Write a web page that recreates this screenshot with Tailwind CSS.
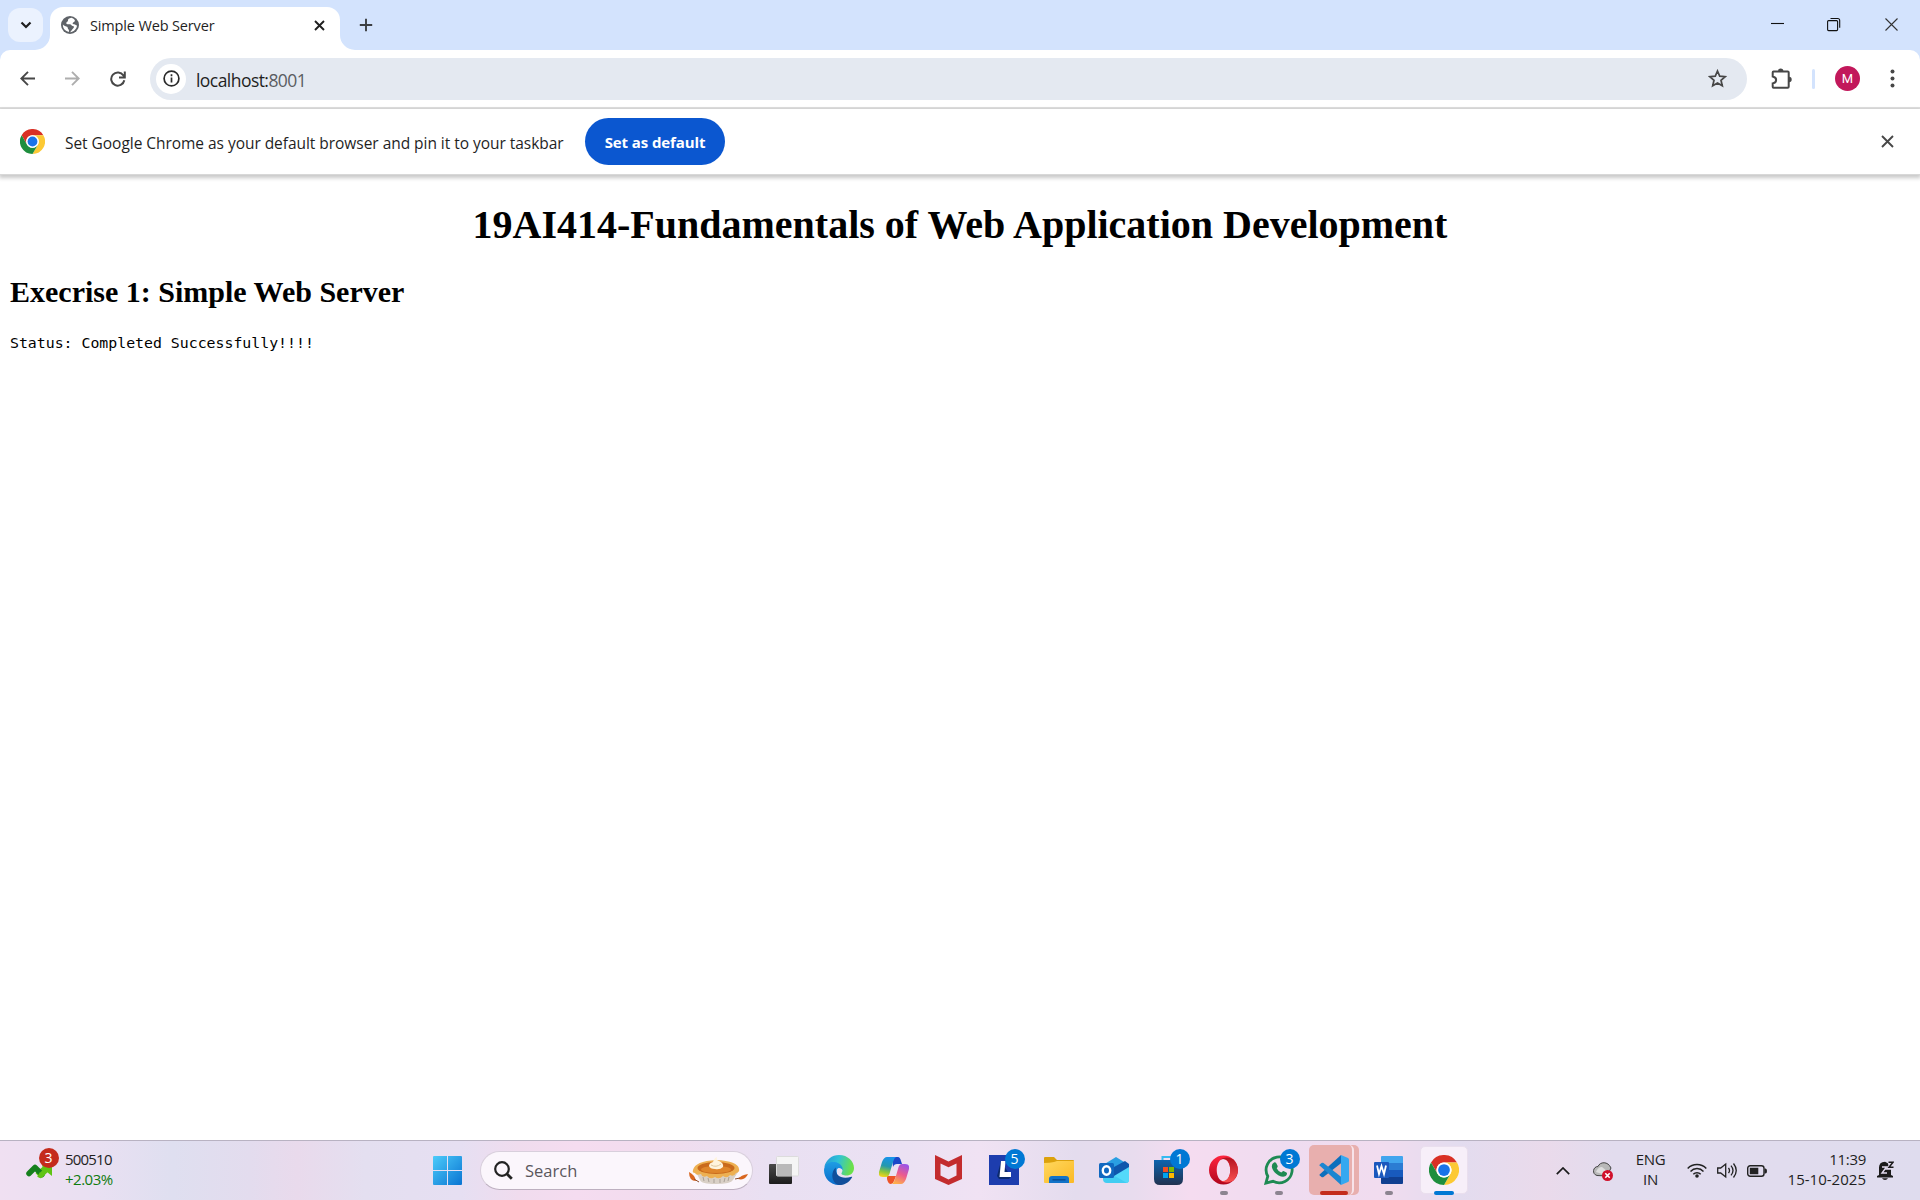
<!DOCTYPE html>
<html lang="en">
<head>
<meta charset="utf-8">
<title>Simple Web Server</title>
<script src="https://cdn.jsdelivr.net/npm/@tailwindcss/browser@4"></script>
</head>
<body class="w-[1920px] h-[1200px] overflow-hidden flex flex-col bg-white font-['Open_Sans','Noto_Sans',sans-serif] text-[#1f1f1f]">
<svg class="hidden">
  <symbol id="chrome" viewBox="0 0 48 48">
    <circle cx="24" cy="24" r="24" fill="#fff"/>
    <path fill="#d93025" d="M3.2 12A24 24 0 0 1 44.8 12H24A12 12 0 0 0 13.6 30Z"/>
    <path fill="#fcc934" d="M44.8 12A24 24 0 0 1 24 48L34.4 30A12 12 0 0 0 24 12Z"/>
    <path fill="#1e8e3e" d="M24 48A24 24 0 0 1 3.2 12L13.6 30A12 12 0 0 0 34.4 30Z"/>
    <circle cx="24" cy="24" r="12" fill="#fff"/><circle cx="24" cy="24" r="9.4" fill="#1a73e8"/>
  </symbol>
</svg>

<!-- Tab strip -->
<header class="h-[50px] shrink-0 bg-[#d3e3fd] flex items-start">
  <div class="ml-2 mt-2 w-[35px] h-[34px] rounded-xl bg-[#ebf2fe] flex items-center justify-center">
    <svg class="size-3" viewBox="0 0 12 12" fill="none" stroke="#1f1f1f" stroke-width="2.2"><path d="M1.5 3.5 6 8l4.500-4.500"/></svg>
  </div>
  <svg class="ml-[-8px] mt-[7px] w-[15px] h-[43px]" viewBox="0 0 15 43"><path fill="#fff" d="M15 28A15 15 0 0 1 0 43H15Z"/></svg>
  <div class="mt-[7px] h-[43px] w-[290px] bg-white rounded-t-[13px] flex items-center pl-[11px] pb-[7px]">
    <svg class="size-[18px]" viewBox="0 0 18 18"><circle cx="9" cy="9" r="9" fill="#5f6368"/><path fill="#fff" d="M10.500 1.800C8 2.200 6.800 3.300 7 4.600c.2 1.300-1.800 1-1.700 2.600.1 1.300 1.800 1 3.500 1 1.600 0 1.500 1.700 3 1.900 1.300.2 1.600 1.100.5 2.100-1.400 1.100-1.800 2.600-3.300 4 3.600-.2 6.800-3.300 7-6.700-1.500-.2-1.700-1.400-3-1.300-1.400.2-1.900-1.200-.8-1.800 1-.6 1.800-.6 1.700-1.800C13.400 3.200 12 2.200 10.500 1.800ZM1.900 8.500c1.300 1.500 3 1.700 4.200 2.300 1.200.7.300 2.100 1.500 2.800.6.500.3 1.700.3 2.300-3.400-.5-6.300-3.600-6-7.400Z"/></svg>
    <span class="ml-[11px] mt-[2px] w-[125px] text-[14.500px] leading-5 tracking-[-0.15px] whitespace-nowrap">Simple Web Server</span>
    <svg class="ml-[99px] size-[11px]" viewBox="0 0 11 11" stroke="#1f1f1f" stroke-width="1.900"><path d="m1 1 9 9M10 1l-9 9"/></svg>
  </div>
  <svg class="mt-[7px] w-[15px] h-[43px]" viewBox="0 0 15 43"><path fill="#fff" d="M0 28A15 15 0 0 0 15 43H0Z"/></svg>
  <svg class="ml-[4px] mt-[18px] size-[14px]" viewBox="0 0 14 14" stroke="#3c3f43" stroke-width="1.900"><path d="M7 .8v12.400M.8 7h12.400"/></svg>
  <svg class="ml-auto mt-[17px] mr-[21px] w-[128px] h-[15px]" viewBox="0 0 128 15" fill="none" stroke="#111" stroke-width="1.100"><path d="M0 6.500h13"/><rect x="56.600" y="3.600" width="10" height="10" rx="1"/><path d="M59.500 1.500h7.200a2 2 0 0 1 2 2v7.200"/><path d="m114.500 1.500 12 12M126.500 1.500l-12 12" stroke="#333"/></svg>
</header>

<!-- Toolbar -->
<div class="bg-[#d3e3fd] shrink-0">
<div class="h-[59px] bg-white rounded-t-[10px] border-b-2 border-[#e0e0e0] flex items-center">
  <svg class="ml-5 size-[15px]" viewBox="0 0 15 15" fill="none" stroke="#474747" stroke-width="1.900"><path d="M15 7.500H1.400M8 .8 1.300 7.500 8 14.200"/></svg>
  <svg class="ml-[30px] size-[15px]" viewBox="0 0 15 15" fill="none" stroke="#aeaeae" stroke-width="1.900"><path d="M0 7.500h13.600M7 .8l6.700 6.700L7 14.200"/></svg>
  <svg class="ml-[30px] size-[16px]" viewBox="0 0 16 16" fill="none" stroke="#474747" stroke-width="2"><path d="M14.300 9.300A6.600 6.600 0 1 1 13.400 4.500L14.500 6M14.800.5v5.900H9"/></svg>
  <div class="ml-[24px] w-[1597px] h-[42px] rounded-full bg-[#e4e9f1] flex items-center">
    <div class="ml-[6px] size-[30px] rounded-full bg-white flex items-center justify-center">
      <svg class="size-[17px]" viewBox="0 0 17 17" fill="none" stroke="#2a2a2a" stroke-width="1.700"><circle cx="8.500" cy="8.500" r="7.400"/><path d="M8.500 7.500v5M8.500 4.300v1.900"/></svg>
    </div>
    <span class="ml-[10px] mt-[2px] text-[17.500px] leading-6 tracking-[-0.550px] whitespace-nowrap">localhost:<span class="text-[#5a5d62]">8001</span></span>
    <svg class="ml-auto mr-[20px] size-[19px]" viewBox="0 0 19 19" fill="none" stroke="#474747" stroke-width="1.700"><path d="m9.500 2 2.200 5.200 5.500.5L13 11.300l1.300 5.500-4.800-2.900-4.800 2.900L6 11.300 1.800 7.700l5.500-.5Z"/></svg>
  </div>
  <svg class="ml-6 size-[22px]" viewBox="0 0 22 22" fill="none" stroke="#474747" stroke-width="2"><path d="M2.500 3.500h14.200q1 0 1 1v14.200q0 1-1 1H2.500q-.8 0-.8-1v-3.300c4.600-1 4.600-6 0-7V4.500q0-1 .8-1Z"/><path fill="#474747" stroke="none" d="M7 3.200a2.700 2.700 0 0 1 5.400 0ZM18 8.800a2.700 2.700 0 0 1 0 5.400Z"/></svg>
  <div class="ml-[19px] w-[3px] h-5 rounded bg-[#d3e3fd]"></div>
  <div class="ml-5 size-[25px] rounded-full bg-[#c2185b] text-white flex items-center justify-center text-[13px] leading-none font-['Roboto',sans-serif]">M</div>
  <svg class="ml-[30px] w-[5px] h-[19px]" viewBox="0 0 5 19" fill="#474747"><circle cx="2.500" cy="2.500" r="2"/><circle cx="2.500" cy="9.500" r="2"/><circle cx="2.500" cy="16.500" r="2"/></svg>
</div>
</div>

<!-- Default browser prompt -->
<div class="h-[66px] shrink-0 bg-white border-b border-[#d8d8d8] shadow-[0_2px_4px_1px_rgba(0,0,0,0.22)] flex items-center">
  <svg class="ml-5 size-[25px]"><use href="#chrome"/></svg>
  <span class="ml-5 mt-[2px] w-[520px] text-[15.500px] leading-6 tracking-[-0.040px] whitespace-nowrap">Set Google Chrome as your default browser and pin it to your taskbar</span>
  <button class="w-[140px] h-[47px] pt-px rounded-full bg-[#0b57d0] text-white font-bold text-[15px] tracking-[-0.1px] whitespace-nowrap">Set as default</button>
  <svg class="ml-auto mr-[26px] size-[13px]" viewBox="0 0 13 13" stroke="#474747" stroke-width="1.900"><path d="m1 1 11 11M12 1 1 12"/></svg>
</div>

<!-- Served page -->
<main class="flex-1 px-[10px] pt-[27px] text-black font-['Liberation_Serif',serif]">
  <h1 class="text-[40px] leading-[46px] font-bold text-center whitespace-nowrap">19AI414-Fundamentals of Web Application Development</h1>
  <h2 class="mt-[27px] text-[30px] leading-[34px] font-bold">Execrise 1: Simple Web Server</h2>
  <pre class="mt-[24px] text-[14.850px] leading-5 font-['DejaVu_Sans_Mono',monospace]">Status: Completed Successfully!!!!</pre>
</main>

<!-- Taskbar -->
<footer class="h-[60px] shrink-0 border-t border-[#b8b2c2] flex items-center bg-[linear-gradient(90deg,#f0e0f2_0%,#e9e0f2_5%,#dfdff0_9%,#e3dcee_13%,#e9daec_15.500%,#e4dff0_19%,#e6dff2_24%,#f0dcee_27%,#f5dcf0_30%,#f2dcee_34%,#e9e0f2_40%,#ebe1f3_47%,#f0e2f3_51%,#e4dcee_56%,#e8dcee_59%,#f5dcf0_62%,#efdcf0_67%,#f1dcef_72%,#e3dcef_76%,#eadaeb_80.500%,#e2dcee_84%,#e1dcee_93%,#dfdcee_100%)]">
  <div class="relative ml-[26px] w-7 h-[30px]">
    <svg class="w-7 h-[30px]" viewBox="0 0 28 30"><path d="m16 8 10-1v13l-5-4-7.500 5.500-4-4.500 7-6Z" fill="#5fc414"/><path d="m3 17.500 6-6 7 7" fill="none" stroke="#15801d" stroke-width="5.500" stroke-linejoin="round" stroke-linecap="round"/><path d="m12.500 18.500 2 1.200 8-8" fill="none" stroke="#5fc414" stroke-width="5" stroke-linejoin="round"/></svg>
    <span class="absolute left-[12.500px] top-[-8px] size-5 rounded-full bg-[#c42b1c] text-white text-[14px] leading-5 text-center">3</span>
  </div>
  <div class="ml-[11px] mt-[-4px] w-[368px] text-[15px] leading-5 tracking-[-0.800px]"><div>500510</div><div class="text-[#0f7b0f] tracking-[-0.5px]">+2.03%</div></div>
  <svg class="size-[29px]" viewBox="0 0 29 29"><defs><linearGradient id="wn" x1="0" y1="0" x2="1" y2="1" gradientUnits="objectBoundingBox"><stop offset="0" stop-color="#4ccbfa"/><stop offset="1" stop-color="#0a74d2"/></linearGradient></defs><path fill="url(#wn)" d="M1 0h13v14H0V1Q0 0 1 0ZM15 0h13q1 0 1 1v13H15ZM0 15h14v14H1q-1 0-1-1ZM15 15h14v13q0 1-1 1H15Z"/></svg>
  <div class="ml-[18px] w-[273px] h-[39px] rounded-full border border-[#d8cfdc] border-b-[#bdb0c0] bg-[#fbf6fc] flex items-center">
    <svg class="ml-[13px] size-[19px]" viewBox="0 0 19 19" fill="none" stroke="#222" stroke-width="2.200"><circle cx="8" cy="8" r="6.800"/><path d="m12.800 12.800 5 5" stroke-width="2.800"/></svg>
    <span class="ml-[12px] text-[16.500px] leading-6 text-[#5a565c]">Search</span>
    <svg class="ml-auto mr-[4px] w-[60px] h-[27px]" viewBox="0 0 60 27"><path fill="#d9d0c6" d="M8 15h42l-5 8q-2 4-17 4t-16-4Z"/><path stroke="#aaa197" stroke-width="1" d="m15 20 1 4m4-3 1 4m5-3v4m6-4v4m5-5-1 4m5-5-1 4"/><path fill="#edb052" d="M5 13q2-9 23-10 22 1 23 9 1 3-3 4-2 4-6 2-3 4-7 1-4 4-8 1-5 3-8-1-5 2-6-2-5 2-6-1-3 0-2-3Z"/><ellipse cx="28" cy="11" rx="18.500" ry="6" fill="#c96a1c"/><ellipse cx="28" cy="12.500" rx="15" ry="3.500" fill="#df862b"/><path fill="#fff4dc" d="M21 9q0-3 4-4 1-4 4-5-1 3 2 4 5 2 4 6-3 3-8 2-5 0-6-3Z"/><path d="M23 8q5 3 10-1" stroke="#dfc9a0" fill="none"/><path fill="#d9661f" d="M1 15q6 3 7 9-7 0-7-9ZM60 17q-3 7-10 5 3-4 10-5Z"/><path d="m6 22 5 3M52 21l-5 1" stroke="#8c4b28" fill="none"/></svg>
  </div>

  <div class="ml-[3px] h-[59px] pb-px flex">
    <!-- Task view -->
    <div class="w-[55px] flex items-center justify-center"><svg class="size-[30px]" viewBox="0 0 30 30"><defs><linearGradient id="tv" x1="0" y1="0" x2="0" y2="1"><stop offset="0" stop-color="#4a4a4a"/><stop offset="1" stop-color="#1c1c1c"/></linearGradient></defs><rect y="9" width="23" height="20" rx="1" fill="url(#tv)"/><rect x="7.500" y="1.500" width="22" height="19.500" rx="1" fill="#f5f5f5" stroke="#dcdcdc"/><path fill="#b9b9b9" d="M8 9h15v12H8Z"/></svg></div>
    <!-- Edge -->
    <div class="w-[55px] flex items-center justify-center"><svg class="size-[30px]" viewBox="0 0 30 30"><defs><linearGradient id="e1" x1="0" y1="0" x2="1" y2=".2"><stop offset="0" stop-color="#2496d8"/><stop offset=".5" stop-color="#2fc2d6"/><stop offset="1" stop-color="#6be04a"/></linearGradient><linearGradient id="e2" x1="0" y1="0" x2="0" y2="1"><stop offset="0" stop-color="#1e9de4"/><stop offset="1" stop-color="#0b6bca"/></linearGradient></defs><path fill="url(#e1)" d="M.3 12C2 4.500 8 0 15 0c9 0 15 6.500 15 13 0 5-3.500 7.500-7.500 7.500-3.500 0-5.500-1.200-5-2.300 2.500-4 .5-7.200-5-8.200C8 9.200 3 9.500.3 12Z"/><path fill="url(#e2)" d="M0 15C.5 8 6 6.500 10.500 7c5 .5 8.500 4 8.300 8.500-1.200-2.800-5-3.500-6-.8-1 6 5 13.500 2.200 15.300C6 30 0 23 0 15Z"/><path fill="#114f9b" d="M12 12.500c-1.500 6 3.500 13 15.500 9.300.6-.2.8.2.5.7-3 5-8 8-13 7.500C7.500 28 6 17 12 12.500Z"/></svg></div>
    <!-- Copilot -->
    <div class="w-[55px] flex items-center justify-center"><svg class="w-[30px] h-[27px]" viewBox="0 0 30 27"><defs><linearGradient id="c1" x1=".5" y1="0" x2=".3" y2="1"><stop offset="0" stop-color="#1793ea"/><stop offset=".45" stop-color="#2498ae"/><stop offset=".75" stop-color="#8cc63c"/><stop offset="1" stop-color="#f4d51c"/></linearGradient><linearGradient id="c2" x1=".7" y1="0" x2=".3" y2="1"><stop offset="0" stop-color="#9a54e8"/><stop offset=".5" stop-color="#ec5b8e"/><stop offset="1" stop-color="#ffb04a"/></linearGradient></defs><path fill="#1b48c8" d="M13 0h6q2 0 3 4l1 3h-5q-3 0-4 3Z"/><path fill="#ed5328" d="M8 19h9l-2 5q-1 3-3 3-3 0-4-5Z"/><path fill="url(#c1)" d="M8 0h9q-2 1-3 5l-3 10q-1 5-4 5H4q-5 0-4-5L3 5q2-5 5-5Z"/><path fill="url(#c2)" d="M22 27h-9q2-1 3-5l3-10q1-5 4-5h3q5 0 4 5l-3 10q-2 5-5 5Z"/></svg></div>
    <!-- McAfee -->
    <div class="w-[55px] flex items-center justify-center"><svg class="w-[27px] h-[30px]" viewBox="0 0 27 30"><path fill="#c32c2e" fill-rule="evenodd" d="m0 0 13.500 6.500L27 0v24l-13.500 6L0 24Zm5.500 8.500v12l8 4 8-4v-12l-8 3.800Z"/></svg></div>
    <!-- L app -->
    <div class="relative w-[55px] flex items-center justify-center"><svg class="size-[30px]" viewBox="0 0 30 30"><path fill="#1d3dae" d="M0 0h30v30H0Z"/><path fill="#0c2a6e" d="m12 6-4 15 2 3h10l2-2Z"/><path fill="#fff" d="M12 6h4.500l-1 11H22v5H10.500Z"/></svg><span class="absolute left-[28.500px] top-[8px] size-5 rounded-full bg-[#0078d4] text-white text-[14px] leading-5 text-center">5</span></div>
    <!-- File Explorer -->
    <div class="w-[55px] flex items-center justify-center"><svg class="w-[30px] h-[26px]" viewBox="0 0 30 26"><defs><linearGradient id="fx" x1="0" y1="0" x2="1" y2="1"><stop offset="0" stop-color="#ffd75e"/><stop offset="1" stop-color="#fbb924"/></linearGradient></defs><path fill="#dca10c" d="M0 1q0-1 1-1h9l3 3h16q1 0 1 1v5H0Z"/><path fill="url(#fx)" d="M0 6q6 0 10-1l3-1h17v21q0 1-1 1H1q-1 0-1-1Z"/><path fill="#1273c8" d="M5 26v-4q0-3 3-3h14q3 0 3 3v4Z"/><path stroke="#0a4b90" stroke-width="1.400" d="M8.500 22.800h13"/></svg></div>
    <!-- Outlook -->
    <div class="w-[55px] flex items-center justify-center"><svg class="w-[30px] h-[26px]" viewBox="0 0 30 26"><path fill="#2a9fe2" d="M4 8 17 0l13 8v6H4Z"/><path fill="#41cdf2" d="M30 9v14q0 3-3 3H8q-4 0-4-4v-5l12-2Z"/><path fill="#54d9fa" d="M30 10v13q0 2-2 3L14 18Z"/><path fill="#0e57ad" d="M15 10 26 4l4 3v3l-15 9Z"/><rect y="6" width="15" height="15" rx="1.500" fill="#1068c0"/><ellipse cx="7.500" cy="13.500" rx="3.700" ry="4.200" fill="none" stroke="#fff" stroke-width="2.400"/></svg></div>
    <!-- Store -->
    <div class="relative w-[55px] flex items-center justify-center"><svg class="w-[29px] h-[30px]" viewBox="0 0 29 30"><defs><linearGradient id="st" x1="0" y1="0" x2="0" y2="1"><stop offset="0" stop-color="#0d64ae"/><stop offset="1" stop-color="#213250"/></linearGradient></defs><path d="M8.500 7V2h12v5" fill="none" stroke="#35baf0" stroke-width="2"/><path fill="url(#st)" d="M0 5h29v19q0 6-6 6H6q-6 0-6-6Z"/><path fill="#f25022" d="M9 12h5v5H9z"/><path fill="#7fba00" d="M15 12h5v5h-5z"/><path fill="#00a4ef" d="M9 18h5v5H9z"/><path fill="#ffb900" d="M15 18h5v5h-5z"/></svg><span class="absolute left-[28.500px] top-[8px] size-5 rounded-full bg-[#0078d4] text-white text-[14px] leading-5 text-center">1</span></div>
    <!-- Opera -->
    <div class="relative w-[55px] flex items-center justify-center"><svg class="w-[29px] h-[30px]" viewBox="0 0 30 30"><defs><linearGradient id="op" x1="0" y1="0" x2="0" y2="1"><stop offset="0" stop-color="#ff2640"/><stop offset="1" stop-color="#b0051c"/></linearGradient><linearGradient id="oq" x1="0" y1="0" x2="0" y2="1"><stop offset="0" stop-color="#b3121f"/><stop offset="1" stop-color="#fb5151"/></linearGradient></defs><path fill="url(#op)" fill-rule="evenodd" d="M15 0a15 15 0 1 0 0 30 15 15 0 0 0 0-30Zm0 3.500c4 0 7 5 7 11.500s-3 11.500-7 11.500S8 21.500 8 15s3-11.500 7-11.500Z"/><path fill="url(#oq)" d="M11 4.500Q18 0 25 4a15 15 0 0 1 0 22q-7 4-14-.5c6 3 11-2 11-10.500S17 1.500 11 4.500Z"/></svg><i class="absolute bottom-[4px] w-2 h-1 rounded-full bg-[#8c8490]"></i></div>
    <!-- WhatsApp -->
    <div class="relative w-[55px] flex items-center justify-center"><svg class="size-[30px]" viewBox="0 0 30 30"><path fill="none" stroke="#1e8a53" stroke-width="2.800" d="m1.900 28.100 1.900-6.900A13 13 0 1 1 9 26.300Z"/><path fill="#1e8a53" d="M10 7.500q1-.8 2 .2l1.700 3.200q.3.800-1 2.300 1.300 3 4.600 4.300 1.500-1.800 2.200-1.600l3 1.500q1 .6.200 2.300c-1.500 2.500-4.500 2.500-8 .7-4-2.200-6.700-6-6.900-9.200q0-2.400 2.200-3.700Z"/></svg><span class="absolute left-[28.500px] top-[8px] size-5 rounded-full bg-[#0078d4] text-white text-[14px] leading-5 text-center">3</span><i class="absolute bottom-[4px] w-2 h-1 rounded-full bg-[#8c8490]"></i></div>
    <!-- VS Code, two stacked windows asking for attention -->
    <div class="relative w-[55px] flex items-center justify-center">
      <div class="absolute left-[2.500px] top-[4px] w-[50px] h-[50px] rounded-[5px] bg-[#e8afae]"></div>
      <div class="absolute left-[2.500px] top-[4px] w-[45px] h-[50px] rounded-[5px] border-r-2 border-[#f8e3ea]"></div>
      <svg class="relative size-[30px]" viewBox="0 0 30 30"><path fill="#0d6fbd" d="M.6 19.500 22 0v8.200L4.500 22q-1 .7-2 0L.8 20.600q-.7-.6-.2-1.100Z"/><path fill="#1c86d1" d="M.6 10.500 22 30v-8.200L4.500 8q-1-.7-2 0L.8 9.400q-.7.6-.2 1.100Z"/><path fill="#35a8f0" d="m22 0 7 3q1 .5 1 1.500v21q0 1-1 1.500l-7 3Z"/></svg>
      <i class="absolute bottom-[4px] left-[13.500px] w-7 h-1 rounded-full bg-[#c42b1c]"></i>
    </div>
    <!-- Word -->
    <div class="relative w-[55px] flex items-center justify-center"><svg class="w-[29px] h-[28px]" viewBox="0 0 29 28"><path fill="#41a5ee" d="M7 1q0-1 1-1h20q1 0 1 1v6H7Z"/><path fill="#2b7cd3" d="M7 7h22v7H7z"/><path fill="#185abd" d="M7 14h22v7H7z"/><path fill="#103f91" d="M7 21h22v6q0 1-1 1H8q-1 0-1-1Z"/><rect y="6" width="15" height="16" rx="1" fill="#1b58bd"/><path d="m3 9.500 2 8.500 2.500-8 2.500 8 2-8.500" fill="none" stroke="#fff" stroke-width="1.800"/></svg><i class="absolute bottom-[4px] w-2 h-1 rounded-full bg-[#8c8490]"></i></div>
    <!-- Chrome, focused -->
    <div class="relative w-[55px] flex items-center justify-center"><div class="size-[48px] rounded-[5px] bg-[#f7eff9] border border-[#eadfee] flex items-center justify-center"><svg class="size-[30px]"><use href="#chrome"/></svg></div><i class="absolute bottom-[4px] w-5 h-1 rounded-full bg-[#0078d4]"></i></div>
  </div>

  <!-- System tray -->
  <div class="ml-auto pr-[26px] flex items-center">
    <svg class="w-[14px] h-2" viewBox="0 0 14 8" fill="none" stroke="#1b1b1b" stroke-width="1.700"><path d="M.8 7.200 7 1l6.200 6.200"/></svg>
    <svg class="ml-[23px] mt-[2px] w-[20px] h-[20px]" viewBox="0 0 20 20"><path fill="#b8b8b8" stroke="#444" stroke-width="1" d="M4 13.500C-1.500 12 0 4.500 5 4.500 7-.5 15-1 18 6L14 14Z"/><path fill="#dedede" d="M3 10q2-5 6-5l6 5-3 3Z"/><circle cx="14.500" cy="13.500" r="5.500" fill="#d0112b"/><path d="m12.300 11.300 4.400 4.400m0-4.400-4.400 4.400" stroke="#fff" stroke-width="1.600"/></svg>
    <div class="ml-[22px] mt-[-3px] w-[31px] text-center text-[15px] leading-5 tracking-[-0.3px]"><div>ENG</div><div>IN</div></div>
    <svg class="ml-[21px] w-5 h-[15px]" viewBox="0 0 20 15" fill="none" stroke="#222" stroke-width="1.500"><path d="M.7 5.500a13 13 0 0 1 18.600 0M3.500 8.400a9 9 0 0 1 13 0M6.300 11.200a5.300 5.300 0 0 1 7.400 0"/><circle cx="10" cy="13" r="1.800" fill="#222" stroke="none"/></svg>
    <svg class="ml-[10px] w-5 h-[17px]" viewBox="0 0 20 17" fill="none" stroke="#222" stroke-width="1.300"><path d="M.7 6v5h3l5 4V2l-5 4ZM11.500 5.800q2 2.700 0 5.400M14 3.700q4 4.800 0 9.600M16.500 1.500q5.500 7 0 14"/></svg>
    <svg class="ml-[10px] w-5 h-3" viewBox="0 0 20 12"><rect x=".7" y=".7" width="16.300" height="10.600" rx="2.500" fill="none" stroke="#222" stroke-width="1.400"/><path fill="#222" d="M2.800 2.800h8.500v6.500H2.800ZM17.500 3.500h1q1.500 0 1.500 2.500t-1.500 2.500h-1Z"/></svg>
    <div class="ml-[21px] mt-[-4px] w-[78px] flex flex-col items-end text-[15px] leading-5 tracking-[0.020px] whitespace-nowrap"><div class="tracking-[-0.3px]">11:39</div><div>15-10-2025</div></div>
    <svg class="ml-[11px] w-[17px] h-[19px]" viewBox="0 0 17 19"><path fill="#1b1b1b" d="M2 14V6.500Q2 1 8 .7L14 4v10l2 1v1.500H0V15ZM5 17.300h6q-1 1.700-3 1.700t-3-1.700Z"/><path d="M5 6h4.500L5 12h5" fill="none" stroke="#e3dcef" stroke-width="1.400"/><path stroke="#e3dcef" stroke-width="3.500" fill="none" d="M11 2h4.500L11.500 7H16"/><path stroke="#1b1b1b" stroke-width="1.500" fill="none" d="M11.500 1.200H16L12 6.300h4.500"/></svg>
  </div>
</footer>
</body>
</html>
